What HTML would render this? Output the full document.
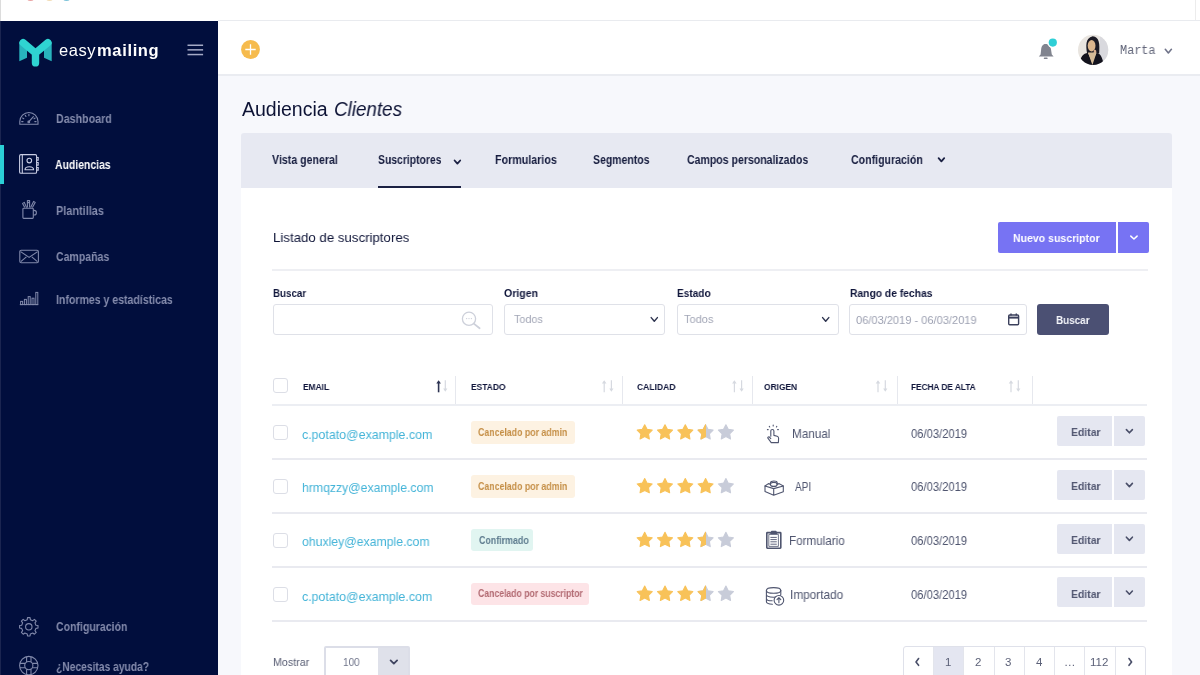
<!DOCTYPE html>
<html><head><meta charset="utf-8">
<style>
*{box-sizing:border-box;margin:0;padding:0}
html,body{width:1200px;height:675px;overflow:hidden;background:#fff;font-family:"Liberation Sans",sans-serif}
body{position:relative}
.b{position:absolute}
.t{position:absolute;white-space:nowrap;transform-origin:0 0;will-change:transform}
svg{position:absolute;overflow:visible}
</style></head><body>
<!-- browser chrome strip -->
<div class="b" style="left:0;top:0;width:1px;height:21px;background:#dcdcdc"></div>
<div class="b" style="left:1195px;top:0;width:1px;height:21px;background:#ececec"></div>
<div class="b" style="left:27px;top:-4px;width:7px;height:5px;border-radius:50%;background:#e9a3a3"></div>
<div class="b" style="left:46px;top:-4px;width:7px;height:5px;border-radius:50%;background:#f2dcb5"></div>
<div class="b" style="left:63px;top:-4px;width:7px;height:5px;border-radius:50%;background:#7cc3d9"></div>
<!-- sidebar -->
<div class="b" style="left:0;top:21px;width:218px;height:654px;background:#010e3d"></div>
<div class="b" style="left:0;top:21px;width:1px;height:654px;background:#1b2550"></div>
<div class="b" style="left:0;top:145px;width:4px;height:39px;background:#2bcfd6"></div>
<!-- header -->
<div class="b" style="left:218px;top:20px;width:982px;height:56px;background:#fff;border-top:1px solid #e9ebef;border-bottom:2px solid #eaecf1"></div>
<!-- main -->
<div class="b" style="left:218px;top:76px;width:982px;height:599px;background:#f7f8fc"></div>
<div class="b" style="left:241px;top:133px;width:931px;height:55px;background:#e7e9f2;border-radius:3px 3px 0 0"></div>
<div class="b" style="left:241px;top:188px;width:931px;height:487px;background:#fff"></div>
<div class="b" style="left:378px;top:186px;width:83px;height:2px;background:#1b2143"></div>
<!-- nuevo suscriptor -->
<div class="b" style="left:998px;top:222px;width:118px;height:31px;background:#7773f3;border-radius:2px 0 0 2px"></div>
<div class="b" style="left:1118px;top:222px;width:31px;height:31px;background:#7773f3;border-radius:0 2px 2px 0"></div>
<div class="b" style="left:272px;top:269px;width:876px;height:2px;background:#eeeff3"></div>
<!-- filter inputs -->
<div class="b" style="left:273px;top:304px;width:220px;height:31px;border:1px solid #dfe1e8;border-radius:3px"></div>
<div class="b" style="left:504px;top:304px;width:161px;height:31px;border:1px solid #dfe1e8;border-radius:3px"></div>
<div class="b" style="left:677px;top:304px;width:162px;height:31px;border:1px solid #dfe1e8;border-radius:3px"></div>
<div class="b" style="left:849px;top:304px;width:178px;height:31px;border:1px solid #dfe1e8;border-radius:3px"></div>
<div class="b" style="left:1037px;top:304px;width:72px;height:31px;background:#4b5073;border-radius:3px"></div>
<!-- table header -->
<div class="b" style="left:273px;top:378px;width:15px;height:15px;border:1px solid #dcdee6;border-radius:3px"></div>
<div class="b" style="left:455px;top:376px;width:1px;height:29px;background:#e6e8ee"></div>
<div class="b" style="left:622px;top:376px;width:1px;height:29px;background:#e6e8ee"></div>
<div class="b" style="left:752px;top:376px;width:1px;height:29px;background:#e6e8ee"></div>
<div class="b" style="left:897px;top:376px;width:1px;height:29px;background:#e6e8ee"></div>
<div class="b" style="left:1032px;top:376px;width:1px;height:29px;background:#e6e8ee"></div>
<div class="b" style="left:272px;top:404px;width:875px;height:2px;background:#eceef3"></div>
<div class="b" style="left:273px;top:425.2px;width:15px;height:15px;border:1px solid #dcdee6;border-radius:3px"></div>
<div class="b" style="left:272px;top:458.2px;width:875px;height:2px;background:#e9eaf0"></div>
<div class="b" style="left:470.5px;top:421.2px;width:104.0px;height:22.5px;background:#fdf2e2;border-radius:3px"></div>
<div class="b" style="left:1057px;top:416.0px;width:55px;height:30px;background:#e5e7f1;border-radius:2px 0 0 2px"></div>
<div class="b" style="left:1114px;top:416.0px;width:30.5px;height:30px;background:#e5e7f1;border-radius:0 2px 2px 0"></div>
<div class="b" style="left:273px;top:479.0px;width:15px;height:15px;border:1px solid #dcdee6;border-radius:3px"></div>
<div class="b" style="left:272px;top:512.0px;width:875px;height:2px;background:#e9eaf0"></div>
<div class="b" style="left:470.5px;top:475.1px;width:104.0px;height:22.5px;background:#fdf2e2;border-radius:3px"></div>
<div class="b" style="left:1057px;top:469.8px;width:55px;height:30px;background:#e5e7f1;border-radius:2px 0 0 2px"></div>
<div class="b" style="left:1114px;top:469.8px;width:30.5px;height:30px;background:#e5e7f1;border-radius:0 2px 2px 0"></div>
<div class="b" style="left:273px;top:532.8px;width:15px;height:15px;border:1px solid #dcdee6;border-radius:3px"></div>
<div class="b" style="left:272px;top:565.8px;width:875px;height:2px;background:#e9eaf0"></div>
<div class="b" style="left:470.5px;top:528.9px;width:62.5px;height:22.5px;background:#e1f5f1;border-radius:3px"></div>
<div class="b" style="left:1057px;top:523.6px;width:55px;height:30px;background:#e5e7f1;border-radius:2px 0 0 2px"></div>
<div class="b" style="left:1114px;top:523.6px;width:30.5px;height:30px;background:#e5e7f1;border-radius:0 2px 2px 0"></div>
<div class="b" style="left:273px;top:586.6px;width:15px;height:15px;border:1px solid #dcdee6;border-radius:3px"></div>
<div class="b" style="left:272px;top:619.6px;width:875px;height:2px;background:#e9eaf0"></div>
<div class="b" style="left:470.5px;top:582.6px;width:118.5px;height:22.5px;background:#fde4e7;border-radius:3px"></div>
<div class="b" style="left:1057px;top:577.4px;width:55px;height:30px;background:#e5e7f1;border-radius:2px 0 0 2px"></div>
<div class="b" style="left:1114px;top:577.4px;width:30.5px;height:30px;background:#e5e7f1;border-radius:0 2px 2px 0"></div>
<!-- footer -->
<div class="b" style="left:324px;top:646px;width:86px;height:40px;border:2px solid #dcdee8;border-radius:2px;background:#fff"></div>
<div class="b" style="left:378px;top:648px;width:30px;height:40px;background:#dfe1ea"></div>
<div class="b" style="left:903px;top:646px;width:243px;height:40px;border:1.5px solid #dfe1ea;border-radius:3px;background:#fff"></div>
<div class="b" style="left:933px;top:647px;width:30px;height:40px;background:#e4e6f1"></div>
<div class="b" style="left:932.9px;top:647px;width:1px;height:30px;background:#e3e5ec"></div>
<div class="b" style="left:963.3px;top:647px;width:1px;height:30px;background:#e3e5ec"></div>
<div class="b" style="left:993.6px;top:647px;width:1px;height:30px;background:#e3e5ec"></div>
<div class="b" style="left:1023.9px;top:647px;width:1px;height:30px;background:#e3e5ec"></div>
<div class="b" style="left:1054.3px;top:647px;width:1px;height:30px;background:#e3e5ec"></div>
<div class="b" style="left:1084.2px;top:647px;width:1px;height:30px;background:#e3e5ec"></div>
<div class="b" style="left:1114.9px;top:647px;width:1px;height:30px;background:#e3e5ec"></div>
<svg style="left:0;top:0" width="1200" height="675" viewBox="0 0 1200 675" fill="none">
<polygon points="19.3,42 27,48.5 27,57.8 19.3,61.3" fill="#28b3bd"/>
<polygon points="51.7,42 44,48.5 44,57.8 51.7,61.3" fill="#28b3bd"/>
<path d="M23.1,42.6 L35.5,53 L47.9,42.6 M35.5,53 L35.5,62.9" stroke="#2fd4d2" stroke-width="7.4" stroke-linecap="round" stroke-linejoin="round"/>
<rect x="187.5" y="44.5" width="15.6" height="1.5" fill="#a5aac6"/>
<rect x="187.5" y="49.1" width="15.6" height="1.5" fill="#a5aac6"/>
<rect x="187.5" y="53.8" width="15.6" height="1.5" fill="#a5aac6"/>
<g stroke="#8189ab" stroke-width="1.1" stroke-linecap="round">
<path d="M19.8,124.3 L19.8,121.6 A9.1,9.1 0 0 1 38,121.6 L38,124.3 Z"/>
<line x1="21.70" y1="121.60" x2="23.00" y2="121.60"/>
<line x1="22.66" y1="118.00" x2="23.79" y2="118.65"/>
<line x1="25.30" y1="115.36" x2="25.95" y2="116.49"/>
<line x1="28.90" y1="114.40" x2="28.90" y2="115.70"/>
<line x1="35.14" y1="118.00" x2="34.01" y2="118.65"/>
<line x1="36.10" y1="121.60" x2="34.80" y2="121.60"/>
<line x1="28.9" y1="121.6" x2="33.4" y2="116.6"/><circle cx="28.8" cy="121.9" r="0.9" fill="#8189ab"/>
</g>
<g stroke="#c9cde4" stroke-width="1.1">
<rect x="19.6" y="154.6" width="17" height="18.7" rx="1.3"/>
<line x1="22.3" y1="154.6" x2="22.3" y2="173.3"/>
<circle cx="29.3" cy="160.6" r="2.3"/>
<path d="M25,169.8 C25,165.8 33.6,165.8 33.6,169.8 Z"/>
<path d="M36.6,157.5 h1.6 v2.6 h-1.6 M36.6,162.5 h1.6 v2.6 h-1.6 M36.6,167.5 h1.6 v2.6 h-1.6"/>
</g>
<g stroke="#8189ab" stroke-width="1.1" stroke-linejoin="round">
<rect x="22.9" y="208.2" width="10.4" height="10.2" rx="0.8"/>
<path d="M33.3,210.4 h0.8 a2.3,2.3 0 0 1 0,4.6 h-0.8"/>
<path d="M24.8,207.6 L22.6,203.4 L24.3,202.4 L26.6,207.6"/>
<path d="M27.4,207.6 L27.4,200.6 L29.6,200.6 L29.6,207.6 M27.4,202.6 h2.2"/>
<path d="M30.6,207.6 L33.6,201.4 L35.2,202.4 L32.4,207.6"/>
</g>
<g stroke="#8189ab" stroke-width="1.1" stroke-linejoin="round">
<rect x="19.8" y="250.2" width="18.6" height="12.5" rx="1.4"/>
<path d="M20.6,251.6 L29.1,257.4 L37.6,251.6 M20.8,261.6 L26.4,256.8 M37.4,261.6 L31.8,256.8"/>
</g>
<g stroke="#8189ab" stroke-width="1">
<line x1="19.8" y1="304.6" x2="38.2" y2="304.6"/>
<rect x="20.6" y="301.4" width="2" height="3.2"/>
<rect x="24.4" y="299.4" width="2" height="5.2"/>
<rect x="28.2" y="296.6" width="2" height="8.0"/>
<rect x="32.0" y="298.2" width="2" height="6.4"/>
<rect x="35.8" y="292.4" width="2" height="12.2"/>
</g>
<polygon points="35.93,625.24 38.01,625.53 38.01,628.07 35.93,628.36 34.95,630.74 36.22,632.41 34.41,634.22 32.74,632.95 30.36,633.93 30.07,636.01 27.53,636.01 27.24,633.93 24.86,632.95 23.19,634.22 21.38,632.41 22.65,630.74 21.67,628.36 19.59,628.07 19.59,625.53 21.67,625.24 22.65,622.86 21.38,621.19 23.19,619.38 24.86,620.65 27.24,619.67 27.53,617.59 30.07,617.59 30.36,619.67 32.74,620.65 34.41,619.38 36.22,621.19 34.95,622.86" stroke="#8189ab" stroke-width="1.1" stroke-linejoin="round"/>
<circle cx="28.8" cy="626.8" r="3.2" stroke="#8189ab" stroke-width="1.1"/>
<g stroke="#8189ab" stroke-width="1.1">
<circle cx="28.8" cy="665.6" r="9.2"/><circle cx="28.8" cy="665.6" r="4.1"/>
<path d="M26.6,656.7 v5.3 M31,656.7 v5.3 M26.6,669.2 v5.3 M31,669.2 v5.3 M19.9,663.4 h5.3 M19.9,667.8 h5.3 M32.4,663.4 h5.3 M32.4,667.8 h5.3"/>
</g>
<circle cx="250.5" cy="49.5" r="9.4" fill="#f6bb4d"/>
<path d="M245.3,49.5 h10.4 M250.5,44.3 v10.4" stroke="#ffffff" stroke-width="1.3"/>
<path d="M1045.6,44.1 C1042.6,44.1 1041.4,46.6 1041.1,50 L1040.6,54.6 L1038.8,56.6 L1053.6,56.6 L1051.8,54.6 L1051.1,50 C1050.8,46.6 1048.6,44.1 1045.6,44.1 Z" fill="#81848f"/>
<rect x="1043.8" y="57.6" width="3.8" height="1.5" rx="0.7" fill="#81848f"/>
<circle cx="1052.8" cy="42.6" r="5.4" fill="#ffffff"/>
<circle cx="1052.8" cy="42.6" r="4.1" fill="#2fcfd6"/>
<defs><clipPath id="av"><circle cx="1093.1" cy="49.9" r="15.1"/></clipPath></defs>
<g clip-path="url(#av)">
<rect x="1077" y="34" width="32" height="32" fill="#e9e5e0"/>
<rect x="1100" y="34" width="10" height="32" fill="#d9d9de"/>
<path d="M1087,53 C1086,46 1085,38 1092.7,36.2 C1099.6,37 1099.8,44 1099.2,53.5 L1095,53 Z" fill="#1b1a24"/>
<ellipse cx="1091.6" cy="45.8" rx="3.9" ry="5.7" fill="#dcb68d"/>
<path d="M1094,50 C1095.5,49 1097,50.5 1096,53 L1093.5,53 Z" fill="#d9ad8c"/>
<path d="M1079,66 C1080,57 1083,53.6 1088,52.8 L1092,62 L1096.5,52.8 C1100.5,53.6 1102.5,57 1104,66 Z" fill="#13131d"/>
<polygon points="1088,52.6 1096.6,52.6 1092.4,65" fill="#d6bc98"/>
</g>
<polyline points="1165.30,49.30 1168.35,52.90 1171.40,49.30" stroke="#70748a" stroke-width="1.6" stroke-linecap="round" stroke-linejoin="round"/>
<polyline points="454.60,160.50 457.40,163.60 460.20,160.50" stroke="#1b2143" stroke-width="1.8" stroke-linecap="round" stroke-linejoin="round"/>
<polyline points="938.60,158.20 941.40,161.30 944.20,158.20" stroke="#1b2143" stroke-width="1.8" stroke-linecap="round" stroke-linejoin="round"/>
<polyline points="1130.80,236.10 1133.95,239.00 1137.10,236.10" stroke="#ffffff" stroke-width="1.5" stroke-linecap="round" stroke-linejoin="round"/>
<g stroke="#cdd0da" stroke-width="1.3"><circle cx="469" cy="318.8" r="6.6"/><line x1="473.8" y1="323.6" x2="479.6" y2="328.2" stroke-width="1.8" stroke-linecap="round"/></g>
<g fill="#cdd0da"><circle cx="466.6" cy="318.6" r="0.7"/><circle cx="469" cy="318.6" r="0.7"/><circle cx="471.4" cy="318.6" r="0.7"/></g>
<polyline points="651.20,317.60 654.30,321.20 657.40,317.60" stroke="#2f3550" stroke-width="1.45" stroke-linecap="round" stroke-linejoin="round"/>
<polyline points="822.60,317.60 825.70,321.20 828.80,317.60" stroke="#2f3550" stroke-width="1.45" stroke-linecap="round" stroke-linejoin="round"/>
<g stroke="#3b405c" stroke-width="1.4"><rect x="1008.7" y="315" width="9.9" height="9.8" rx="1"/><line x1="1008.7" y1="317.6" x2="1018.6" y2="317.6" stroke-width="2"/><line x1="1011" y1="313.4" x2="1011" y2="315.6"/><line x1="1016.3" y1="313.4" x2="1016.3" y2="315.6"/></g>
<line x1="438.6" y1="381.6" x2="438.6" y2="392.3" stroke="#2d3352" stroke-width="1.6"/><polygon points="438.6,380.2 436.3,383.4 440.9,383.4" fill="#2d3352"/><line x1="445.3" y1="380.2" x2="445.3" y2="390.4" stroke="#d6d9e0" stroke-width="1.2"/><polygon points="445.3,391.8 443.2,388.6 447.4,388.6" fill="#d6d9e0"/>
<line x1="604.2" y1="381.6" x2="604.2" y2="392.3" stroke="#d6d9e0" stroke-width="1.2"/><polygon points="604.2,380.2 601.9,383.4 606.5,383.4" fill="#d6d9e0"/><line x1="611.4" y1="380.2" x2="611.4" y2="390.4" stroke="#d6d9e0" stroke-width="1.2"/><polygon points="611.4,391.8 609.3,388.6 613.5,388.6" fill="#d6d9e0"/>
<line x1="734.4" y1="381.6" x2="734.4" y2="392.3" stroke="#d6d9e0" stroke-width="1.2"/><polygon points="734.4,380.2 732.1,383.4 736.7,383.4" fill="#d6d9e0"/><line x1="741.6" y1="380.2" x2="741.6" y2="390.4" stroke="#d6d9e0" stroke-width="1.2"/><polygon points="741.6,391.8 739.5,388.6 743.7,388.6" fill="#d6d9e0"/>
<line x1="878.0" y1="381.6" x2="878.0" y2="392.3" stroke="#d6d9e0" stroke-width="1.2"/><polygon points="878.0,380.2 875.7,383.4 880.3,383.4" fill="#d6d9e0"/><line x1="885.3" y1="380.2" x2="885.3" y2="390.4" stroke="#d6d9e0" stroke-width="1.2"/><polygon points="885.3,391.8 883.2,388.6 887.4,388.6" fill="#d6d9e0"/>
<line x1="1011.0" y1="381.6" x2="1011.0" y2="392.3" stroke="#d6d9e0" stroke-width="1.2"/><polygon points="1011.0,380.2 1008.7,383.4 1013.3,383.4" fill="#d6d9e0"/><line x1="1018.3" y1="380.2" x2="1018.3" y2="390.4" stroke="#d6d9e0" stroke-width="1.2"/><polygon points="1018.3,391.8 1016.2,388.6 1020.4,388.6" fill="#d6d9e0"/>
<polygon points="644.70,424.70 647.05,429.36 652.21,430.16 648.50,433.84 649.34,438.99 644.70,436.60 640.06,438.99 640.90,433.84 637.19,430.16 642.35,429.36" fill="#f8c259" stroke="#f8c259" stroke-width="1.1" stroke-linejoin="round"/>
<polygon points="665.00,424.70 667.35,429.36 672.51,430.16 668.80,433.84 669.64,438.99 665.00,436.60 660.36,438.99 661.20,433.84 657.49,430.16 662.65,429.36" fill="#f8c259" stroke="#f8c259" stroke-width="1.1" stroke-linejoin="round"/>
<polygon points="685.30,424.70 687.65,429.36 692.81,430.16 689.10,433.84 689.94,438.99 685.30,436.60 680.66,438.99 681.50,433.84 677.79,430.16 682.95,429.36" fill="#f8c259" stroke="#f8c259" stroke-width="1.1" stroke-linejoin="round"/>
<defs><clipPath id="hs0"><rect x="696.6" y="422.6" width="9.4" height="20"/></clipPath></defs>
<polygon points="705.60,424.70 707.95,429.36 713.11,430.16 709.40,433.84 710.24,438.99 705.60,436.60 700.96,438.99 701.80,433.84 698.09,430.16 703.25,429.36" fill="#c8ccd9" stroke="#c8ccd9" stroke-width="1.1" stroke-linejoin="round"/>
<polygon points="705.60,424.70 707.95,429.36 713.11,430.16 709.40,433.84 710.24,438.99 705.60,436.60 700.96,438.99 701.80,433.84 698.09,430.16 703.25,429.36" fill="#f8c259" stroke="#f8c259" stroke-width="1.1" stroke-linejoin="round" clip-path="url(#hs0)"/>
<polygon points="725.90,424.70 728.25,429.36 733.41,430.16 729.70,433.84 730.54,438.99 725.90,436.60 721.26,438.99 722.10,433.84 718.39,430.16 723.55,429.36" fill="#c8ccd9" stroke="#c8ccd9" stroke-width="1.1" stroke-linejoin="round"/>
<polygon points="644.70,478.50 647.05,483.16 652.21,483.96 648.50,487.64 649.34,492.79 644.70,490.40 640.06,492.79 640.90,487.64 637.19,483.96 642.35,483.16" fill="#f8c259" stroke="#f8c259" stroke-width="1.1" stroke-linejoin="round"/>
<polygon points="665.00,478.50 667.35,483.16 672.51,483.96 668.80,487.64 669.64,492.79 665.00,490.40 660.36,492.79 661.20,487.64 657.49,483.96 662.65,483.16" fill="#f8c259" stroke="#f8c259" stroke-width="1.1" stroke-linejoin="round"/>
<polygon points="685.30,478.50 687.65,483.16 692.81,483.96 689.10,487.64 689.94,492.79 685.30,490.40 680.66,492.79 681.50,487.64 677.79,483.96 682.95,483.16" fill="#f8c259" stroke="#f8c259" stroke-width="1.1" stroke-linejoin="round"/>
<polygon points="705.60,478.50 707.95,483.16 713.11,483.96 709.40,487.64 710.24,492.79 705.60,490.40 700.96,492.79 701.80,487.64 698.09,483.96 703.25,483.16" fill="#f8c259" stroke="#f8c259" stroke-width="1.1" stroke-linejoin="round"/>
<polygon points="725.90,478.50 728.25,483.16 733.41,483.96 729.70,487.64 730.54,492.79 725.90,490.40 721.26,492.79 722.10,487.64 718.39,483.96 723.55,483.16" fill="#c8ccd9" stroke="#c8ccd9" stroke-width="1.1" stroke-linejoin="round"/>
<polygon points="644.70,532.30 647.05,536.96 652.21,537.76 648.50,541.44 649.34,546.59 644.70,544.20 640.06,546.59 640.90,541.44 637.19,537.76 642.35,536.96" fill="#f8c259" stroke="#f8c259" stroke-width="1.1" stroke-linejoin="round"/>
<polygon points="665.00,532.30 667.35,536.96 672.51,537.76 668.80,541.44 669.64,546.59 665.00,544.20 660.36,546.59 661.20,541.44 657.49,537.76 662.65,536.96" fill="#f8c259" stroke="#f8c259" stroke-width="1.1" stroke-linejoin="round"/>
<polygon points="685.30,532.30 687.65,536.96 692.81,537.76 689.10,541.44 689.94,546.59 685.30,544.20 680.66,546.59 681.50,541.44 677.79,537.76 682.95,536.96" fill="#f8c259" stroke="#f8c259" stroke-width="1.1" stroke-linejoin="round"/>
<defs><clipPath id="hs2"><rect x="696.6" y="530.2" width="9.4" height="20"/></clipPath></defs>
<polygon points="705.60,532.30 707.95,536.96 713.11,537.76 709.40,541.44 710.24,546.59 705.60,544.20 700.96,546.59 701.80,541.44 698.09,537.76 703.25,536.96" fill="#c8ccd9" stroke="#c8ccd9" stroke-width="1.1" stroke-linejoin="round"/>
<polygon points="705.60,532.30 707.95,536.96 713.11,537.76 709.40,541.44 710.24,546.59 705.60,544.20 700.96,546.59 701.80,541.44 698.09,537.76 703.25,536.96" fill="#f8c259" stroke="#f8c259" stroke-width="1.1" stroke-linejoin="round" clip-path="url(#hs2)"/>
<polygon points="725.90,532.30 728.25,536.96 733.41,537.76 729.70,541.44 730.54,546.59 725.90,544.20 721.26,546.59 722.10,541.44 718.39,537.76 723.55,536.96" fill="#c8ccd9" stroke="#c8ccd9" stroke-width="1.1" stroke-linejoin="round"/>
<polygon points="644.70,586.10 647.05,590.76 652.21,591.56 648.50,595.24 649.34,600.39 644.70,598.00 640.06,600.39 640.90,595.24 637.19,591.56 642.35,590.76" fill="#f8c259" stroke="#f8c259" stroke-width="1.1" stroke-linejoin="round"/>
<polygon points="665.00,586.10 667.35,590.76 672.51,591.56 668.80,595.24 669.64,600.39 665.00,598.00 660.36,600.39 661.20,595.24 657.49,591.56 662.65,590.76" fill="#f8c259" stroke="#f8c259" stroke-width="1.1" stroke-linejoin="round"/>
<polygon points="685.30,586.10 687.65,590.76 692.81,591.56 689.10,595.24 689.94,600.39 685.30,598.00 680.66,600.39 681.50,595.24 677.79,591.56 682.95,590.76" fill="#f8c259" stroke="#f8c259" stroke-width="1.1" stroke-linejoin="round"/>
<defs><clipPath id="hs3"><rect x="696.6" y="584.0" width="9.4" height="20"/></clipPath></defs>
<polygon points="705.60,586.10 707.95,590.76 713.11,591.56 709.40,595.24 710.24,600.39 705.60,598.00 700.96,600.39 701.80,595.24 698.09,591.56 703.25,590.76" fill="#c8ccd9" stroke="#c8ccd9" stroke-width="1.1" stroke-linejoin="round"/>
<polygon points="705.60,586.10 707.95,590.76 713.11,591.56 709.40,595.24 710.24,600.39 705.60,598.00 700.96,600.39 701.80,595.24 698.09,591.56 703.25,590.76" fill="#f8c259" stroke="#f8c259" stroke-width="1.1" stroke-linejoin="round" clip-path="url(#hs3)"/>
<polygon points="725.90,586.10 728.25,590.76 733.41,591.56 729.70,595.24 730.54,600.39 725.90,598.00 721.26,600.39 722.10,595.24 718.39,591.56 723.55,590.76" fill="#c8ccd9" stroke="#c8ccd9" stroke-width="1.1" stroke-linejoin="round"/>
<g stroke="#4f556f" stroke-width="1.1" stroke-linecap="round" stroke-linejoin="round">
<path d="M770.8,436.3 L770.8,431 A1.55,1.55 0 0 1 773.9,431 L773.9,435.4 L777.2,436.2 C778.2,436.5 778.6,437.2 778.6,438.2 L778.4,442.6 L771.2,442.6 L767.9,438.2 C767.4,437.4 768.4,436.4 769.3,437 L770.8,438.6"/>
<path d="M767.4,429.6 h0.8 M769.3,426.4 l0.4,0.6 M773.2,425.1 v0.9 M776.8,426.4 l-0.4,0.6 M777.6,429.6 h0.8"/>
<path d="M765,486 L765,491.6 L773.7,495.2 L783.3,491.8 L783.3,486 M765,486 L773.7,488.6 L783.3,486 M773.7,488.6 L773.7,495.2"/>
<path d="M765,486 L768.4,483.6 L770.2,484.1 M777.4,484.1 L779.2,483.6 L783.3,486"/>
<ellipse cx="773.8" cy="484.4" rx="3.4" ry="2"/><path d="M770.4,484.4 L770.4,482.8 A3.4,1.8 0 0 1 777.2,482.8 L777.2,484.4"/>
<rect x="766.8" y="532.6" width="14" height="15.6" rx="0.6" stroke-width="1.6"/>
<rect x="769.2" y="534.4" width="9.2" height="12" stroke-width="0.8"/>
<path d="M770.8,533.6 L771.6,531.4 L776,531.4 L776.8,533.6 Z" fill="#4f556f"/>
<path d="M770.8,537.4 h5.6 M770.8,539.6 h5.6 M770.8,541.8 h5.6 M770.8,544.2 h5.6" stroke-width="0.9"/>
<ellipse cx="773.6" cy="590.4" rx="7.2" ry="2.8"/>
<path d="M766.4,590.4 L766.4,601.6 C766.4,603.4 769.6,604.2 772.4,604.2 M766.4,594.6 C766.4,596.4 769.6,597.2 773.4,597.2 C776.6,597.2 780.8,596.4 780.8,594.6 L780.8,590.4 M766.4,598.4 C766.4,600 769,600.8 772.2,600.8"/>
<circle cx="778.9" cy="600.3" r="4.8" fill="#ffffff"/>
<path d="M778.9,602.8 L778.9,597.8 M777,599.6 L778.9,597.6 L780.8,599.6"/>
</g>
<polyline points="1126.40,429.60 1129.40,432.80 1132.40,429.60" stroke="#4a4f69" stroke-width="1.6" stroke-linecap="round" stroke-linejoin="round"/>
<polyline points="1126.40,483.40 1129.40,486.60 1132.40,483.40" stroke="#4a4f69" stroke-width="1.6" stroke-linecap="round" stroke-linejoin="round"/>
<polyline points="1126.40,537.20 1129.40,540.40 1132.40,537.20" stroke="#4a4f69" stroke-width="1.6" stroke-linecap="round" stroke-linejoin="round"/>
<polyline points="1126.40,591.00 1129.40,594.20 1132.40,591.00" stroke="#4a4f69" stroke-width="1.6" stroke-linecap="round" stroke-linejoin="round"/>
<polyline points="390.60,660.40 393.85,663.60 397.10,660.40" stroke="#3f4460" stroke-width="1.8" stroke-linecap="round" stroke-linejoin="round"/>
<polyline points="918.6,658.5 916,661.9 918.6,665.3" stroke="#4a4f69" stroke-width="1.6" stroke-linecap="round" stroke-linejoin="round"/>
<polyline points="1129,658.5 1131.6,661.9 1129,665.3" stroke="#4a4f69" stroke-width="1.6" stroke-linecap="round" stroke-linejoin="round"/>
</svg>
<div class="t" style="left:59.40px;top:42.03px;font:normal normal 16.50px/16.50px 'Liberation Sans';color:#ffffff;letter-spacing:0.566px;">easy</div>
<div class="t" style="left:96.70px;top:42.03px;font:normal bold 16.50px/16.50px 'Liberation Sans';color:#ffffff;letter-spacing:0.653px;">mailing</div>
<div class="t" style="left:55.70px;top:113.04px;font:normal bold 12.00px/12.00px 'Liberation Sans';color:#858cad;transform:scaleX(0.8902);">Dashboard</div>
<div class="t" style="left:55.30px;top:158.94px;font:normal bold 12.00px/12.00px 'Liberation Sans';color:#ffffff;transform:scaleX(0.8687);">Audiencias</div>
<div class="t" style="left:55.50px;top:204.94px;font:normal bold 12.00px/12.00px 'Liberation Sans';color:#858cad;transform:scaleX(0.9092);">Plantillas</div>
<div class="t" style="left:55.70px;top:251.24px;font:normal bold 12.00px/12.00px 'Liberation Sans';color:#858cad;transform:scaleX(0.8784);">Campañas</div>
<div class="t" style="left:55.70px;top:293.64px;font:normal bold 12.00px/12.00px 'Liberation Sans';color:#858cad;transform:scaleX(0.8794);">Informes y estadísticas</div>
<div class="t" style="left:56.00px;top:621.44px;font:normal bold 12.00px/12.00px 'Liberation Sans';color:#858cad;transform:scaleX(0.8778);">Configuración</div>
<div class="t" style="left:56.00px;top:660.74px;font:normal bold 12.00px/12.00px 'Liberation Sans';color:#858cad;transform:scaleX(0.8553);">¿Necesitas ayuda?</div>
<div class="t" style="left:1119.70px;top:45.32px;font:normal normal 12.00px/12.00px 'Liberation Mono';color:#62667a;transform:scaleX(0.9859);">Marta</div>
<div class="t" style="left:241.70px;top:99.79px;font:normal normal 19.50px/19.50px 'Liberation Sans';color:#0d1335;">Audiencia</div>
<div class="t" style="left:334.13px;top:99.79px;font:italic normal 19.50px/19.50px 'Liberation Sans';color:#0d1335;transform:scaleX(0.9656);">Clientes</div>
<div class="t" style="left:272.40px;top:154.27px;font:normal bold 12.20px/12.20px 'Liberation Sans';color:#161c3e;transform:scaleX(0.8703);">Vista general</div>
<div class="t" style="left:378.00px;top:154.27px;font:normal bold 12.20px/12.20px 'Liberation Sans';color:#161c3e;transform:scaleX(0.8511);">Suscriptores</div>
<div class="t" style="left:494.60px;top:154.27px;font:normal bold 12.20px/12.20px 'Liberation Sans';color:#161c3e;transform:scaleX(0.8776);">Formularios</div>
<div class="t" style="left:593.00px;top:154.27px;font:normal bold 12.20px/12.20px 'Liberation Sans';color:#161c3e;transform:scaleX(0.8587);">Segmentos</div>
<div class="t" style="left:686.60px;top:154.27px;font:normal bold 12.20px/12.20px 'Liberation Sans';color:#161c3e;transform:scaleX(0.8646);">Campos personalizados</div>
<div class="t" style="left:851.00px;top:154.27px;font:normal bold 12.20px/12.20px 'Liberation Sans';color:#161c3e;transform:scaleX(0.8691);">Configuración</div>
<div class="t" style="left:272.53px;top:231.49px;font:normal normal 13.60px/13.60px 'Liberation Sans';color:#0f1538;transform:scaleX(0.9749);">Listado de suscriptores</div>
<div class="t" style="left:1012.80px;top:232.91px;font:normal bold 11.80px/11.80px 'Liberation Sans';color:#ffffff;transform:scaleX(0.8930);">Nuevo suscriptor</div>
<div class="t" style="left:273.30px;top:287.76px;font:normal bold 10.80px/10.80px 'Liberation Sans';color:#10163b;transform:scaleX(0.9009);">Buscar</div>
<div class="t" style="left:503.60px;top:287.86px;font:normal bold 10.80px/10.80px 'Liberation Sans';color:#10163b;transform:scaleX(0.9766);">Origen</div>
<div class="t" style="left:677.00px;top:287.86px;font:normal bold 10.80px/10.80px 'Liberation Sans';color:#10163b;transform:scaleX(0.9340);">Estado</div>
<div class="t" style="left:849.80px;top:288.26px;font:normal bold 10.80px/10.80px 'Liberation Sans';color:#10163b;transform:scaleX(0.9538);">Rango de fechas</div>
<div class="t" style="left:514.00px;top:314.47px;font:normal normal 11.50px/11.50px 'Liberation Sans';color:#a2a6b6;transform:scaleX(0.9374);">Todos</div>
<div class="t" style="left:684.40px;top:314.47px;font:normal normal 11.50px/11.50px 'Liberation Sans';color:#a2a6b6;transform:scaleX(0.9568);">Todos</div>
<div class="t" style="left:856.30px;top:315.17px;font:normal normal 11.50px/11.50px 'Liberation Sans';color:#9da1b2;transform:scaleX(0.9621);">06/03/2019 - 06/03/2019</div>
<div class="t" style="left:1055.80px;top:314.91px;font:normal bold 11.80px/11.80px 'Liberation Sans';color:#f4f5fa;transform:scaleX(0.8389);">Buscar</div>
<div class="t" style="left:302.60px;top:381.96px;font:normal bold 9.50px/9.50px 'Liberation Sans';color:#10163b;transform:scaleX(0.8840);">EMAIL</div>
<div class="t" style="left:470.70px;top:381.96px;font:normal bold 9.50px/9.50px 'Liberation Sans';color:#10163b;transform:scaleX(0.8859);">ESTADO</div>
<div class="t" style="left:636.80px;top:381.96px;font:normal bold 9.50px/9.50px 'Liberation Sans';color:#10163b;transform:scaleX(0.8978);">CALIDAD</div>
<div class="t" style="left:763.90px;top:381.96px;font:normal bold 9.50px/9.50px 'Liberation Sans';color:#10163b;transform:scaleX(0.8853);">ORIGEN</div>
<div class="t" style="left:910.80px;top:381.96px;font:normal bold 9.50px/9.50px 'Liberation Sans';color:#10163b;transform:scaleX(0.8691);">FECHA DE ALTA</div>
<div class="t" style="left:302.30px;top:427.60px;font:normal normal 13.00px/13.00px 'Liberation Sans';color:#44b4d8;transform:scaleX(0.9527);">c.potato@example.com</div>
<div class="t" style="left:478.00px;top:428.05px;font:normal bold 10.40px/10.40px 'Liberation Sans';color:#c58f47;transform:scaleX(0.8451);">Cancelado por admin</div>
<div class="t" style="left:791.54px;top:427.77px;font:normal normal 12.20px/12.20px 'Liberation Sans';color:#4f556f;transform:scaleX(0.9604);">Manual</div>
<div class="t" style="left:911.25px;top:427.77px;font:normal normal 12.20px/12.20px 'Liberation Sans';color:#4f556f;transform:scaleX(0.9188);">06/03/2019</div>
<div class="t" style="left:1070.50px;top:426.28px;font:normal bold 11.60px/11.60px 'Liberation Sans';color:#535872;transform:scaleX(0.8997);">Editar</div>
<div class="t" style="left:302.30px;top:481.40px;font:normal normal 13.00px/13.00px 'Liberation Sans';color:#44b4d8;transform:scaleX(0.9424);">hrmqzzy@example.com</div>
<div class="t" style="left:478.00px;top:481.85px;font:normal bold 10.40px/10.40px 'Liberation Sans';color:#c58f47;transform:scaleX(0.8451);">Cancelado por admin</div>
<div class="t" style="left:794.80px;top:480.97px;font:normal normal 12.20px/12.20px 'Liberation Sans';color:#4f556f;transform:scaleX(0.8204);">API</div>
<div class="t" style="left:911.25px;top:480.97px;font:normal normal 12.20px/12.20px 'Liberation Sans';color:#4f556f;transform:scaleX(0.9188);">06/03/2019</div>
<div class="t" style="left:1070.50px;top:480.08px;font:normal bold 11.60px/11.60px 'Liberation Sans';color:#535872;transform:scaleX(0.8997);">Editar</div>
<div class="t" style="left:302.30px;top:535.20px;font:normal normal 13.00px/13.00px 'Liberation Sans';color:#44b4d8;transform:scaleX(0.9429);">ohuxley@example.com</div>
<div class="t" style="left:478.50px;top:535.65px;font:normal bold 10.40px/10.40px 'Liberation Sans';color:#5d7b8e;transform:scaleX(0.8541);">Confirmado</div>
<div class="t" style="left:789.34px;top:534.57px;font:normal normal 12.20px/12.20px 'Liberation Sans';color:#4f556f;transform:scaleX(0.9554);">Formulario</div>
<div class="t" style="left:911.25px;top:534.57px;font:normal normal 12.20px/12.20px 'Liberation Sans';color:#4f556f;transform:scaleX(0.9188);">06/03/2019</div>
<div class="t" style="left:1070.50px;top:533.88px;font:normal bold 11.60px/11.60px 'Liberation Sans';color:#535872;transform:scaleX(0.8997);">Editar</div>
<div class="t" style="left:302.30px;top:589.70px;font:normal normal 13.00px/13.00px 'Liberation Sans';color:#44b4d8;transform:scaleX(0.9520);">c.potato@example.com</div>
<div class="t" style="left:478.00px;top:589.45px;font:normal bold 10.40px/10.40px 'Liberation Sans';color:#b26a72;transform:scaleX(0.8329);">Cancelado por suscriptor</div>
<div class="t" style="left:789.73px;top:588.87px;font:normal normal 12.20px/12.20px 'Liberation Sans';color:#4f556f;transform:scaleX(0.9705);">Importado</div>
<div class="t" style="left:911.25px;top:588.87px;font:normal normal 12.20px/12.20px 'Liberation Sans';color:#4f556f;transform:scaleX(0.9188);">06/03/2019</div>
<div class="t" style="left:1070.50px;top:587.68px;font:normal bold 11.60px/11.60px 'Liberation Sans';color:#535872;transform:scaleX(0.8997);">Editar</div>
<div class="t" style="left:273.30px;top:656.87px;font:normal normal 11.50px/11.50px 'Liberation Sans';color:#585d73;transform:scaleX(0.9299);">Mostrar</div>
<div class="t" style="left:342.70px;top:657.17px;font:normal normal 11.50px/11.50px 'Liberation Sans';color:#70758b;transform:scaleX(0.8674);">100</div>
<div class="t" style="left:944.50px;top:657.27px;font:normal normal 11.50px/11.50px 'Liberation Sans';color:#5c6178;">1</div>
<div class="t" style="left:974.80px;top:657.27px;font:normal normal 11.50px/11.50px 'Liberation Sans';color:#5c6178;">2</div>
<div class="t" style="left:1004.90px;top:657.27px;font:normal normal 11.50px/11.50px 'Liberation Sans';color:#5c6178;">3</div>
<div class="t" style="left:1035.50px;top:657.27px;font:normal normal 11.50px/11.50px 'Liberation Sans';color:#5c6178;">4</div>
<div class="t" style="left:1089.53px;top:657.27px;font:normal normal 11.50px/11.50px 'Liberation Sans';color:#5c6178;">112</div>
<div class="t" style="left:1063.65px;top:657.27px;font:normal normal 11.50px/11.50px 'Liberation Sans';color:#5c6178;">…</div>
</body></html>
